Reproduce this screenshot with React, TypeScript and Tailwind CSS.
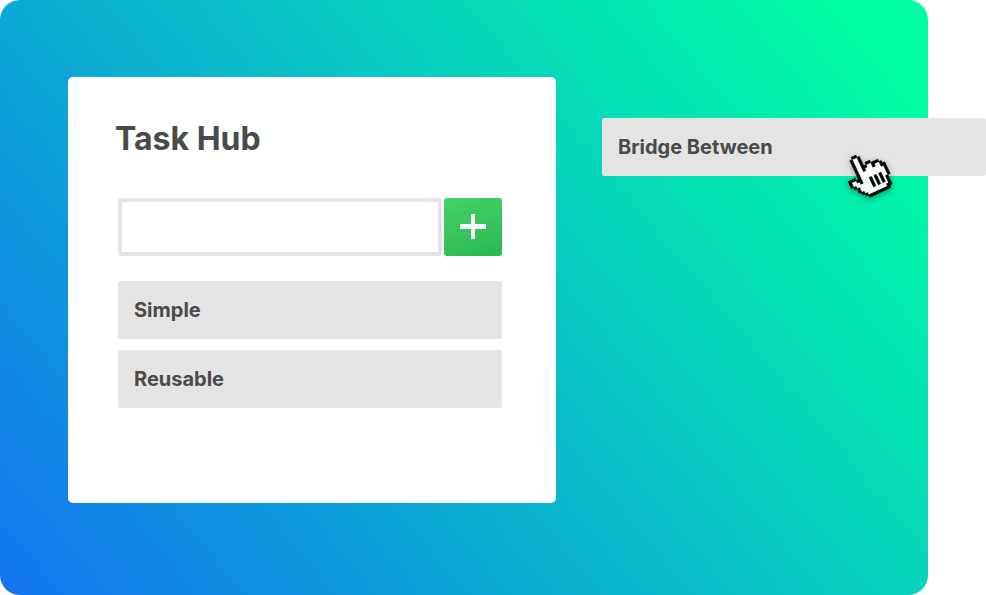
const HAND = [
  ".....BB.........",
  "....BWWB........",
  "....BWWB........",
  "....BWWB........",
  "....BWWB.BB.....",
  "....BWWBBWWBBB..",
  "....BWWBWWWBWWB.",
  "....BWWWWWWWWWBB",
  "BBB.BWWWWWWWWWWB",
  "BWWBBWWWWWWWWWWB",
  "BWWWBWWWBWBWBWWB",
  ".BWWWWWWBWBWBWWB",
  "..BWWWWWBWBWBWB.",
  "..BWWWWWBWBWBWB.",
  "...BWWWWWWWWWWB.",
  "....BWWWWWWWWBB.",
  ".....BBBBBBBBB..",
];

function HandCursor() {
  return (
    <svg
      className="absolute left-[234px] top-6 h-16 w-16 overflow-visible drop-shadow-[0_2px_3px_rgba(0,0,0,0.35)]"
      viewBox="0 0 64 64"
      aria-hidden="true"
    >
      <g transform="translate(31.5 32) rotate(-25) scale(2.6) translate(-8 -8.5)">
        <g fill="#fff" stroke="#fff" strokeWidth="0.1">
          {HAND.flatMap((row, y) =>
            row.split("").map((cell, x) => (cell === "W" ? <rect key={`${x}-${y}`} x={x} y={y} width="1" height="1" /> : null))
          )}
        </g>
        <g fill="#000" stroke="#000" strokeWidth="0.18">
          {HAND.flatMap((row, y) =>
            row.split("").map((cell, x) => (cell === "B" ? <rect key={`${x}-${y}`} x={x} y={y} width="1" height="1" /> : null))
          )}
        </g>
      </g>
    </svg>
  );
}

function Task({ label }: { label: string }) {
  return (
    <li className="flex h-[58px] w-96 items-center rounded-xs bg-[#e4e4e4] px-4 text-[20px] font-bold leading-6 text-[#4a4a4a]">
      {label}
    </li>
  );
}

export default function App() {
  return (
    <div className="h-[595px] w-[986px] overflow-hidden bg-white font-['Inter',sans-serif]">
      <main className="flex h-[595px] w-[928px] items-start rounded-[20px] bg-[linear-gradient(50deg,#1374f1_0%,#00ffa3_94%)] pl-[68px] pt-[77px]">
        <section className="h-[426px] w-[488px] shrink-0 rounded-[5px] bg-white pl-[50px] pt-[42px]">
          <h1 className="-ml-[3px] text-[32px] font-bold leading-10 text-[#4a4a4a]">Task Hub</h1>
          <form className="mt-[39px] flex gap-0.5">
            <input aria-label="New task" className="h-[58px] w-[324px] rounded-[3px] border-4 border-[#e4e4e4] bg-white outline-none" />
            <button
              type="button"
              aria-label="Add task"
              className="flex size-[58px] items-center justify-center rounded-[3px] bg-[linear-gradient(160deg,#48d06c,#28b84f)]"
            >
              <svg className="size-[26px]" viewBox="0 0 26 26" fill="#fff">
                <path d="M11 0h4v10h11v5H15v10h-4V15H0v-5h11z" />
              </svg>
            </button>
          </form>
          <ul className="mt-[25px] flex flex-col gap-[11px]">
            <Task label="Simple" />
            <Task label="Reusable" />
          </ul>
        </section>
        <ul className="relative ml-[46px] mt-[41px] shrink-0">
          <Task label="Bridge Between" />
          <HandCursor />
        </ul>
      </main>
    </div>
  );
}
